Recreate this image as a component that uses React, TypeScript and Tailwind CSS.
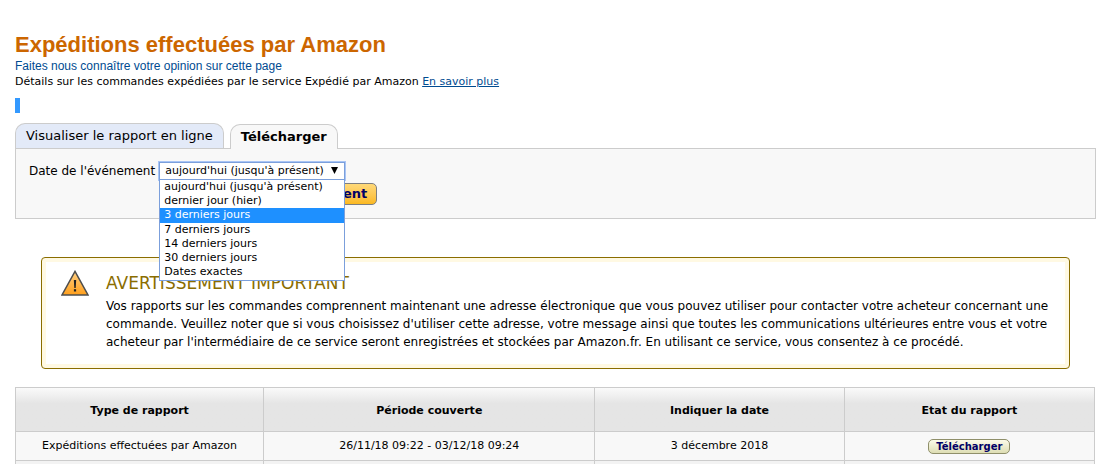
import React, { useState } from "react";

const periods = [
  "aujourd'hui (jusqu'à présent)",
  "dernier jour (hier)",
  "3 derniers jours",
  "7 derniers jours",
  "14 derniers jours",
  "30 derniers jours",
  "Dates exactes",
];

const columns = [
  { label: "Type de rapport", width: "w-[23%]" },
  { label: "Période couverte", width: "w-[30.7%]" },
  { label: "Indiquer la date", width: "w-[23.1%]" },
  { label: "Etat du rapport", width: "w-[23.2%]" },
];

function WarningIcon() {
  return (
    <svg className="h-[26px] w-7 shrink-0" viewBox="0 0 28 26" aria-hidden="true">
      <defs>
        <linearGradient id="warning-fill" x1="0" y1="0" x2="0" y2="1">
          <stop offset="0" stopColor="#ffd083" />
          <stop offset="1" stopColor="#ff9f1c" />
        </linearGradient>
      </defs>
      <path d="M14 1.4 27 25H1Z" fill="url(#warning-fill)" stroke="#4d4d4d" strokeWidth="1.5" />
      <path d="M12.8 10h2.4l-.5 8h-1.4Z" fill="#222" />
      <rect x="12.9" y="19.2" width="2.2" height="2.3" fill="#222" />
    </svg>
  );
}

function PeriodSelect() {
  const [selected, setSelected] = useState(periods[0]);
  return (
    <div className="relative w-[186px] text-[11px]">
      <select
        id="period"
        value={selected}
        onChange={(e) => setSelected(e.target.value)}
        className="block h-[18px] w-full appearance-none border border-[#7b9fdb] bg-white pr-5 pl-[5px] leading-4 text-black ring-1 ring-[#a9c5f5] outline-none"
      >
        {periods.map((p) => (
          <option key={p}>{p}</option>
        ))}
      </select>
      <svg className="pointer-events-none absolute top-[5px] right-[7px] h-[7px] w-[7px]" viewBox="0 0 7 7" aria-hidden="true">
        <path d="M0 0h7L3.5 7Z" fill="#000" />
      </svg>
      <ul
        role="listbox"
        aria-label="Date de l'événement"
        className="absolute top-full left-0 z-10 w-full border border-t-0 border-[#7b9fdb] bg-white pb-px leading-[14px]"
      >
        {periods.map((p, i) => (
          <li
            key={p}
            role="option"
            aria-selected={i === 2}
            onClick={() => setSelected(p)}
            className={i === 2 ? "h-[15px] bg-[#1e90ff] pl-1 text-white" : "h-[14px] pl-1"}
          >
            {p}
          </li>
        ))}
      </ul>
    </div>
  );
}

export default function App() {
  return (
    <main className="h-screen overflow-hidden px-[15px] pt-8 font-['DejaVu_Sans',sans-serif] text-[11px] text-black">
      <h1 className="font-['Liberation_Sans',sans-serif] text-[22px] leading-[26px] font-bold text-[#cc6600]">
        Expéditions effectuées par Amazon
      </h1>
      <a href="#avis" className="block font-['Liberation_Sans',sans-serif] text-xs leading-4 text-[#004b91]">
        Faites nous connaître votre opinion sur cette page
      </a>
      <p className="leading-4">
        Détails sur les commandes expédiées par le service Expédié par Amazon{" "}
        <a href="#aide" className="text-[#004b91] underline">
          En savoir plus
        </a>
      </p>
      <div className="mt-2 h-[15px] w-[5px] bg-[#3399ff]" />

      <div role="tablist" className="mt-[10px] flex items-end gap-[6px] text-[13px]">
        <button
          role="tab"
          aria-selected="false"
          className="h-[25px] rounded-t-[10px] border border-b-0 border-[#ccc] bg-[#e3eaf8] px-[10px]"
        >
          Visualiser le rapport en ligne
        </button>
        <button
          role="tab"
          aria-selected="true"
          className="relative -mb-px h-[25px] rounded-t-[10px] border border-b-0 border-[#ccc] bg-[#f8f8f8] px-[10px] font-bold"
        >
          Télécharger
        </button>
      </div>
      <section className="-mr-px border border-[#ccc] bg-[#f8f8f8] px-[13px] pt-[13px] pb-[13px]">
        <div className="grid grid-cols-[auto_1fr] gap-x-1 gap-y-[3px]">
          <label htmlFor="period" className="text-xs leading-[18px]">
            Date de l'événement
          </label>
          <PeriodSelect />
          <button className="col-start-2 h-[22px] w-[218px] rounded-[5px] border border-[#7f7f7f] bg-linear-to-b from-[#ffd978] to-[#fbb91f] pr-[9px] text-right text-[13px] font-bold whitespace-nowrap text-[#000066]">
            Lancer le téléchargement
          </button>
        </div>
      </section>

      <section className="mr-[25px] ml-[26px] mt-[38px] rounded border border-[#8a6d00] bg-[#fff9e3] p-1">
        <div className="flex gap-[17px] bg-white px-[15px] pt-2 pb-[13px]">
          <WarningIcon />
          <div>
            <h2 className="pt-0.5 text-[17px] leading-[22px] text-[#8a6d00]">AVERTISSEMENT IMPORTANT</h2>
            <p className="pt-[3px] text-xs leading-[18px]">
              Vos rapports sur les commandes comprennent maintenant une adresse électronique que vous pouvez utiliser
              pour contacter votre acheteur concernant une commande. Veuillez noter que si vous choisissez d'utiliser
              cette adresse, votre message ainsi que toutes les communications ultérieures entre vous et votre
              acheteur par l'intermédiaire de ce service seront enregistrées et stockées par Amazon.fr. En utilisant
              ce service, vous consentez à ce procédé.
            </p>
          </div>
        </div>
      </section>

      <table className="mt-[18px] w-full table-fixed border-collapse text-center">
        <thead>
          <tr className="h-11 bg-linear-to-b from-[#fafafa] to-[#e5e5e5] to-35%">
            {columns.map((c) => (
              <th key={c.label} className={`${c.width} border border-[#ccc] pt-1 font-bold`}>
                {c.label}
              </th>
            ))}
          </tr>
        </thead>
        <tbody>
          <tr className="h-[29px] bg-[#f8f8f8]">
            <td className="border border-[#ccc]">Expéditions effectuées par Amazon</td>
            <td className="border border-[#ccc]">26/11/18 09:22 - 03/12/18 09:24</td>
            <td className="border border-[#ccc]">3 décembre 2018</td>
            <td className="border border-[#ccc]">
              <button className="mx-auto block h-[15px] rounded-[5px] border border-[#8f8f6a] bg-linear-to-b from-[#fbfbea] to-[#dedeb4] px-[7px] text-[10px] leading-[13px] font-bold text-[#000066]">
                Télécharger
              </button>
            </td>
          </tr>
          <tr className="h-[29px] bg-[#f3f3f3]">
            {columns.map((c) => (
              <td key={c.label} className="border border-[#ccc]" />
            ))}
          </tr>
        </tbody>
      </table>
    </main>
  );
}
